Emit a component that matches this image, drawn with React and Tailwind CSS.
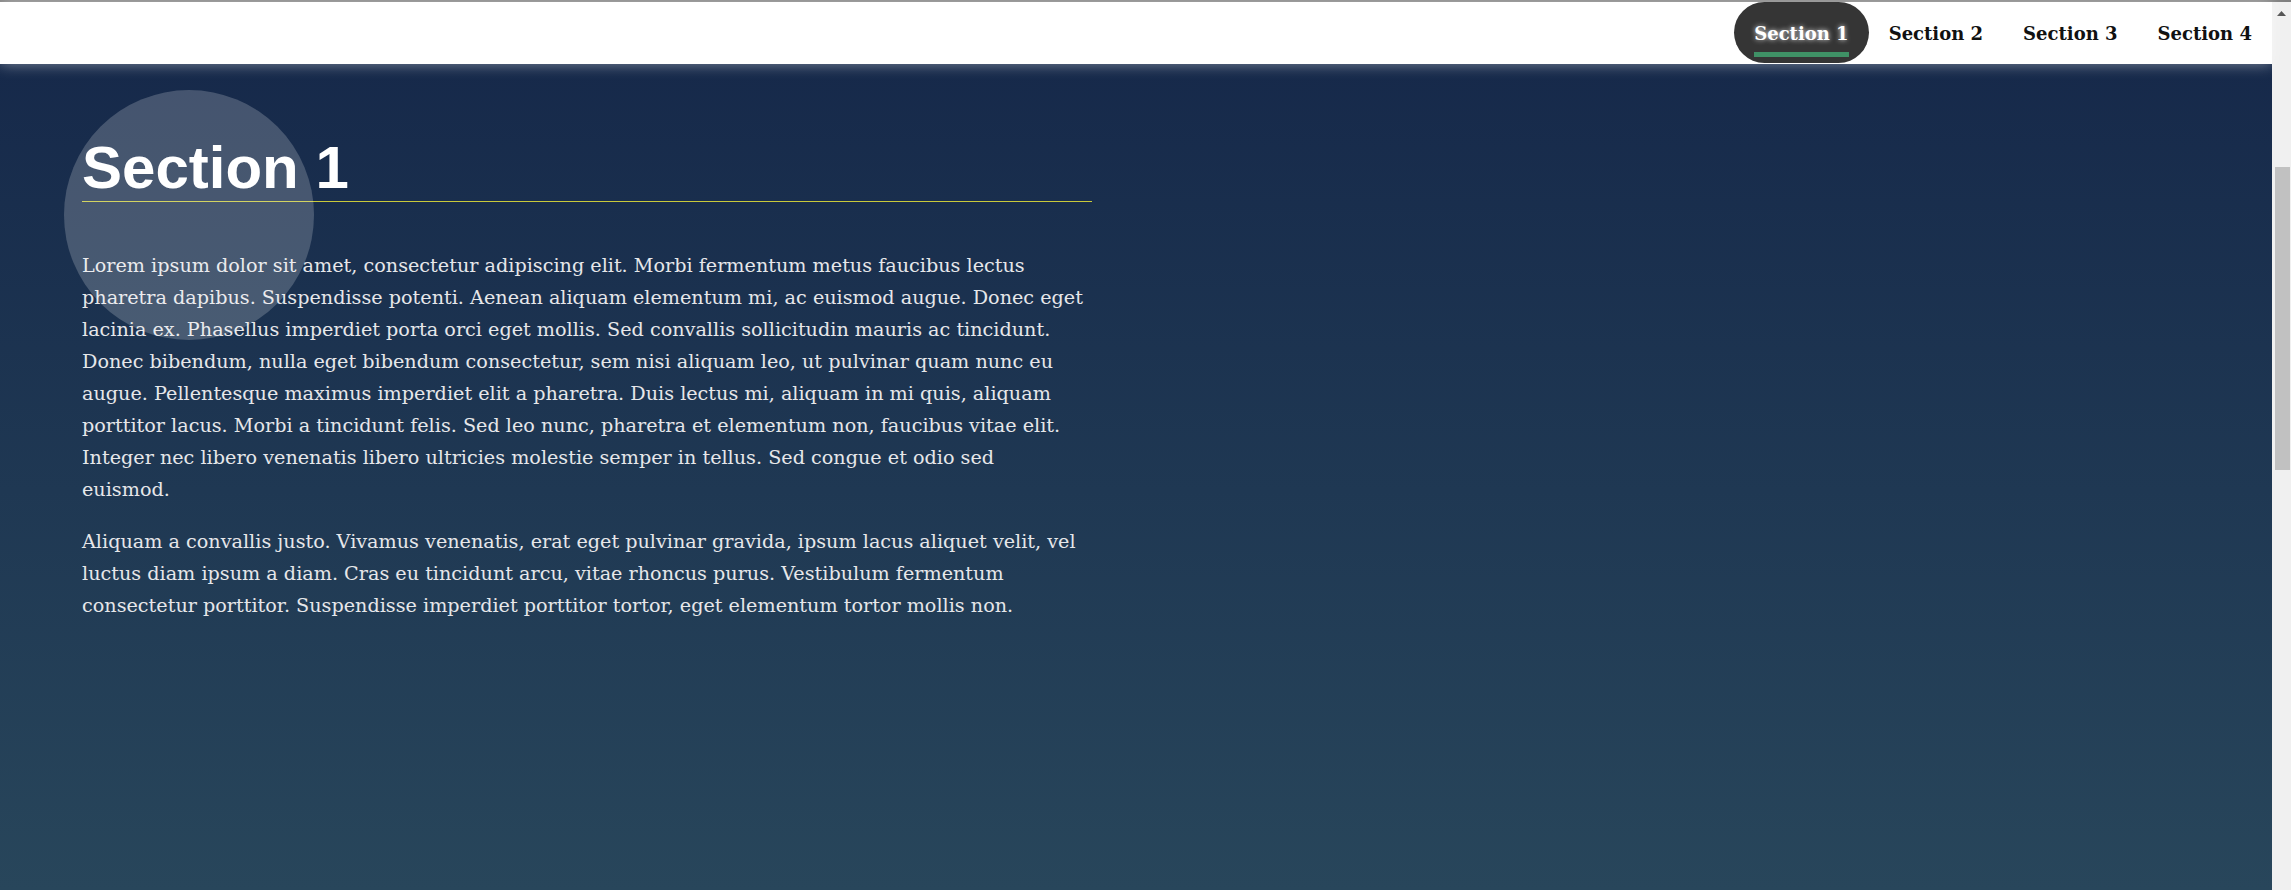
// App.jsx
// Single-page section layout — white top nav with pill tabs, gradient body with one article

const sections = ['Section 1', 'Section 2', 'Section 3', 'Section 4']

function NavItem({ label, active }) {
  return (
    <a
      href="#"
      className={
        'flex flex-col items-center h-[61px] px-5 pt-[20px] rounded-full ' +
        (active ? 'bg-[#353535] text-white [text-shadow:0_0_5px_rgba(255,255,255,0.9)]' : 'text-[#111]')
      }
    >
      <span className="font-bold text-[18px] leading-6 whitespace-nowrap">{label}</span>
      {/* green bar under the active tab */}
      <span className={'mt-[6px] h-[5px] w-full ' + (active ? 'bg-[#3f9166]' : 'bg-transparent')} />
    </a>
  )
}

function Scrollbar() {
  return (
    <div className="w-[19px] shrink-0 bg-[#f0f0f0] flex flex-col items-center">
      {/* up arrow */}
      <svg width="9" height="5" viewBox="0 0 9 5" className="mt-[9px]">
        <polygon points="4.5,0 9,5 0,5" fill="#505050" />
      </svg>
      <div className="mt-[151px] ml-[2px] w-[15px] h-[303px] bg-[#c1c1c1]" />
    </div>
  )
}

export default function App() {
  return (
    <div className="h-[890px] overflow-hidden flex flex-col" style={{ fontFamily: '"DejaVu Serif", serif' }}>
      {/* browser chrome line */}
      <div className="h-[2px] bg-[#7f7f7f] shrink-0" />

      <div className="flex flex-1 min-h-0">
        <div className="relative flex-1 bg-gradient-to-b from-[#152749] to-[#28465b]">
          {/* top nav */}
          <nav className="relative z-20 h-[62px] bg-white flex items-start justify-end [box-shadow:0_0_14px_rgba(255,255,255,0.45)]">
            <div className="flex items-start h-full">
              {sections.map((s, i) => (
                <NavItem key={s} label={s} active={i === 0} />
              ))}
            </div>
          </nav>

          {/* article */}
          <main className="relative z-10 pl-[82px] pt-[70px]">
            <div className="w-[1010px]">
              <h1
                className="text-[60px] leading-[67px] font-bold text-white border-b border-[#c9c93a]"
                style={{ fontFamily: '"Liberation Sans", Arial, sans-serif' }}
              >
                Section 1
              </h1>
              <p className="mt-12 pr-[7px] text-[19.2px] leading-8 text-[#e6e7ea]">
                Lorem ipsum dolor sit amet, consectetur adipiscing elit. Morbi fermentum metus faucibus lectus
                pharetra dapibus. Suspendisse potenti. Aenean aliquam elementum mi, ac euismod augue. Donec eget
                lacinia ex. Phasellus imperdiet porta orci eget mollis. Sed convallis sollicitudin mauris ac
                tincidunt. Donec bibendum, nulla eget bibendum consectetur, sem nisi aliquam leo, ut pulvinar quam
                nunc eu augue. Pellentesque maximus imperdiet elit a pharetra. Duis lectus mi, aliquam in mi quis,
                aliquam porttitor lacus. Morbi a tincidunt felis. Sed leo nunc, pharetra et elementum non, faucibus
                vitae elit. Integer nec libero venenatis libero ultricies molestie semper in tellus. Sed congue et
                odio sed euismod.
              </p>
              <p className="mt-5 pr-[7px] text-[19.2px] leading-8 text-[#e6e7ea]">
                Aliquam a convallis justo. Vivamus venenatis, erat eget pulvinar gravida, ipsum lacus aliquet velit,
                vel luctus diam ipsum a diam. Cras eu tincidunt arcu, vitae rhoncus purus. Vestibulum fermentum
                consectetur porttitor. Suspendisse imperdiet porttitor tortor, eget elementum tortor mollis non.
              </p>
            </div>
          </main>

          {/* cursor circle overlay */}
          <div className="absolute z-10 left-[64px] top-[88px] w-[250px] h-[250px] rounded-full bg-white/20 pointer-events-none" />
        </div>

        <Scrollbar />
      </div>
    </div>
  )
}
